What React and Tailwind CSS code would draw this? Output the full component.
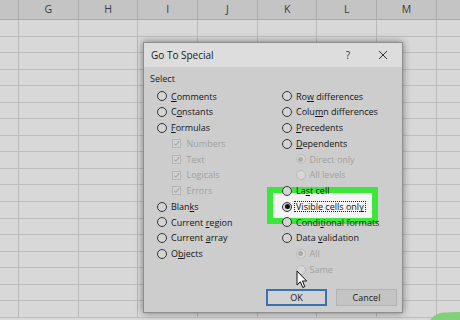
import React from "react";

const cols = ["", "G", "H", "I", "J", "K", "L", "M", ""];
const font = { fontFamily: '"Open Sans", "Noto Sans", sans-serif' };

const Radio = ({ checked, disabled }) => (
    <span
        className={
            "flex items-center justify-center w-[10px] h-[10px] rounded-full border shrink-0 " +
            (disabled ? "border-[#bcbcbc] bg-[#d6d6d6]" : "border-[#333] bg-[#d4d4d4]")
        }
    >
        {checked && (
            <span className={"w-[5px] h-[5px] rounded-full " + (disabled ? "bg-[#acacac]" : "bg-[#111]")} />
        )}
    </span>
);

const Check = () => (
    <span className="flex items-center justify-center w-[9px] h-[9px] border border-[#b4b4b4] bg-[#d2d2d2] shrink-0">
        <svg width="7" height="7" viewBox="0 0 7 7">
            <path d="M1 3.6 L2.8 5.3 L6.2 1.2" fill="none" stroke="#a6a6a6" strokeWidth="1.1" />
        </svg>
    </span>
);

const Row = ({ children, className = "" }) => (
    <div className={"flex items-center h-[15.75px] " + className}>{children}</div>
);

const Opt = ({ label, checked, indent }) => (
    <Row className={indent ? "pl-[13.5px]" : ""}>
        <Radio checked={checked} disabled={indent} />
        <span className={"ml-[4px] " + (indent ? "text-[#a2a2a2]" : "text-[#151515]")}>{label}</span>
    </Row>
);

const Sub = ({ label }) => (
    <Row className="pl-[14.5px]">
        <Check />
        <span className="ml-[6px] text-[#a2a2a2]">{label}</span>
    </Row>
);

export default function App() {
    return (
        <div className="relative w-[460px] h-[320px] overflow-hidden bg-[#d8d8d8]" style={font}>
            {/* column header */}
            <div className="flex h-[20px] bg-[#c4c4c4] border-b border-[#a9a9a9]">
                {cols.map((c, i) => (
                    <div
                        key={i}
                        className={
                            "h-full flex items-center justify-center text-[10.5px] text-[#3a3a3a] border-r border-[#adadad] shrink-0 " +
                            (i === 0 ? "w-[19px]" : "w-[59.7px]")
                        }
                    >
                        {c}
                    </div>
                ))}
            </div>
            {/* grid */}
            <div className="flex">
                {cols.map((c, i) => (
                    <div
                        key={i}
                        className={"shrink-0 border-r border-[#b9b9b9] " + (i === 0 ? "w-[19px]" : "w-[59.7px]")}
                    >
                        {Array.from({ length: 18 }).map((_, r) => (
                            <div key={r} className="h-[16.56px] border-b border-[#bdbdbd]" />
                        ))}
                    </div>
                ))}
            </div>

            {/* dialog */}
            <div className="absolute left-[143px] top-[42px] w-[260px] h-[271px] flex flex-col border border-[#8e8e8e] bg-[#cdcdcd] shadow-[0_0_7px_rgba(0,0,0,0.45)] text-[9px] font-medium">
                <div className="h-[24px] flex items-center bg-[#dddddd] pl-[7px] pr-[14px] shrink-0">
                    <span className="text-[10px] text-[#1a1a1a]">Go To Special</span>
                    <span className="ml-auto text-[10px] text-[#333] mr-[28px]">?</span>
                    <svg width="10" height="10" viewBox="0 0 10 10">
                        <path d="M1 1 L9 9 M9 1 L1 9" stroke="#333" strokeWidth="1" />
                    </svg>
                </div>
                <div className="relative flex-1 flex flex-col">
                    {/* green highlight */}
                    <div className="absolute left-[123px] top-[120px] w-[111px] h-[37px] border-[6px] border-[#3de63a] bg-[#f4f4f4]" />

                    <div className="h-[16px] mt-[4px] pl-[6px] flex items-center text-[#1c1c1c]">Select</div>
                    <div className="relative grid grid-cols-[125px_1fr] pl-[13px] mt-[1.6px]">
                        <div>
                            <Opt label={<><u>C</u>omments</>} />
                            <Opt label={<>C<u>o</u>nstants</>} />
                            <Opt label={<><u>F</u>ormulas</>} />
                            <Sub label="Numbers" />
                            <Sub label="Text" />
                            <Sub label="Logicals" />
                            <Sub label="Errors" />
                            <Opt label={<>Blan<u>k</u>s</>} />
                            <Opt label={<>Current <u>r</u>egion</>} />
                            <Opt label={<>Current <u>a</u>rray</>} />
                            <Opt label={<>O<u>b</u>jects</>} />
                        </div>
                        <div>
                            <Opt label={<>Ro<u>w</u> differences</>} />
                            <Opt label={<>Colu<u>m</u>n differences</>} />
                            <Opt label={<><u>P</u>recedents</>} />
                            <Opt label={<><u>D</u>ependents</>} />
                            <Opt label="Direct only" checked indent />
                            <Opt label="All levels" indent />
                            <Opt label={<>La<u>s</u>t cell</>} />
                            <Row>
                                <Radio checked />
                                <span className="ml-[2px] px-[1px] border border-dotted border-[#222] leading-[9px] text-[#111]">
                                    Visible cells onl<u>y</u>
                                </span>
                            </Row>
                            <Opt label={<>Condi<u>t</u>ional formats</>} />
                            <Opt label={<>Data <u>v</u>alidation</>} />
                            <Opt label="All" checked indent />
                            <Opt label="Same" indent />
                        </div>
                    </div>
                    <div className="flex justify-end gap-[9px] pr-[5px] mt-[11.4px]">
                        <button className="w-[61px] h-[17px] border-2 border-[#3873b0] bg-[#d2d2d2] text-[9px] text-[#1a1a1a]">
                            OK
                        </button>
                        <button className="w-[61px] h-[17px] border border-[#b3b3b3] bg-[#c4c4c4] text-[9px] text-[#1a1a1a]">
                            Cancel
                        </button>
                    </div>
                </div>
            </div>

            {/* mouse cursor */}
            <svg className="absolute left-[296px] top-[270px]" width="12" height="19" viewBox="0 0 12 19">
                <path d="M1 1 L1 15 L4.3 11.8 L6.8 17.5 L8.8 16.6 L6.4 11 L10.6 11 Z" fill="#fff" stroke="#111" strokeWidth="1" strokeLinejoin="round" />
            </svg>

            {/* green corner */}
            <svg className="absolute left-[430px] top-[311px]" width="30" height="9" viewBox="0 0 30 9">
                <path d="M0 9 Q5 2 14 1.5 L30 1 L30 9 Z" fill="#7fd27a" />
            </svg>
        </div>
    );
}
